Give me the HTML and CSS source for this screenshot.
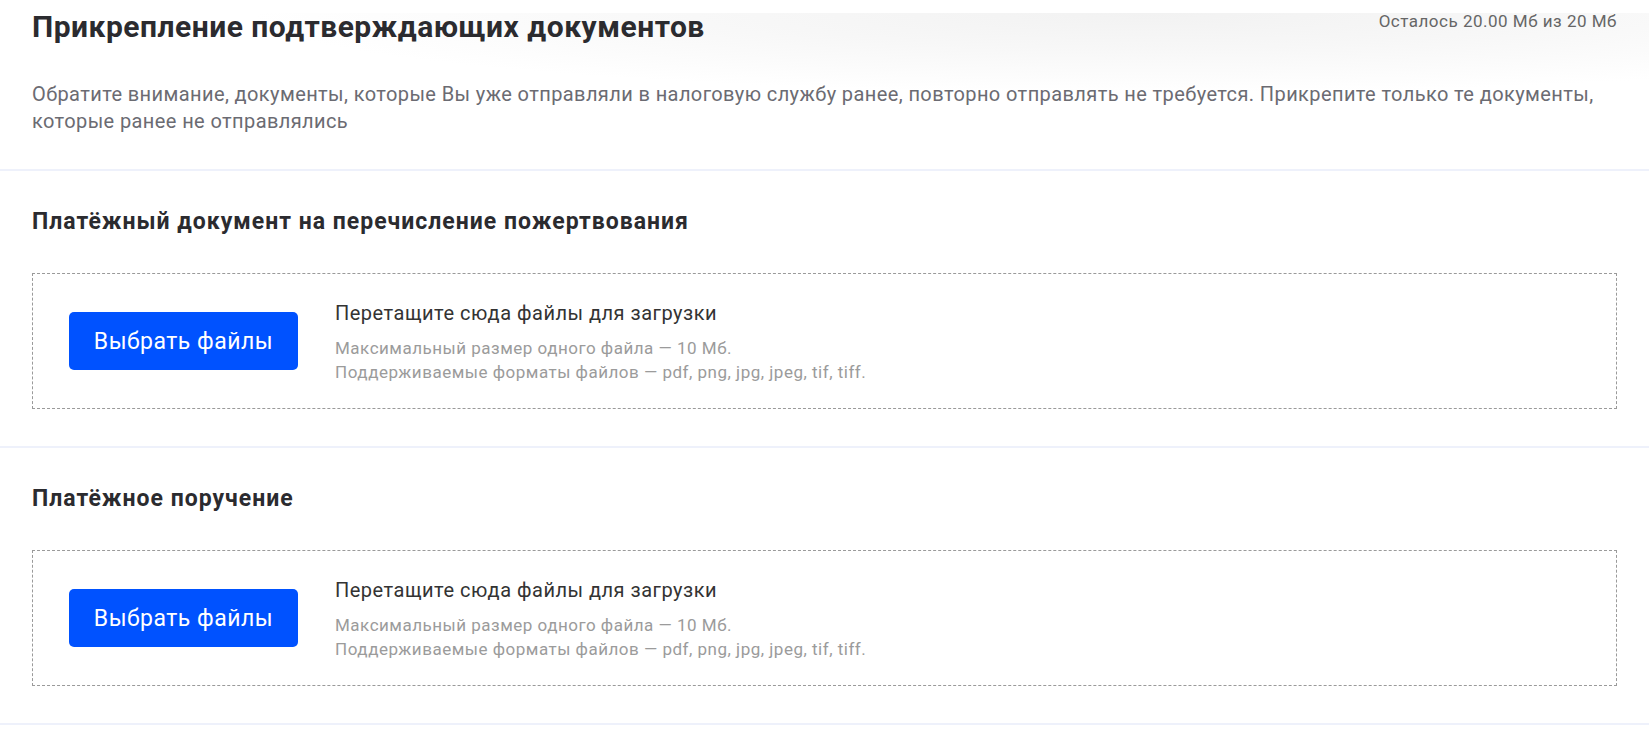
FILE: index.html
```html
<!DOCTYPE html>
<html lang="ru">
<head>
<meta charset="utf-8">
<title>Прикрепление подтверждающих документов</title>
<link rel="stylesheet" href="styles.css">
</head>
<body>
<div class="page">
  <header class="header">
    <div class="header-row">
      <h1 class="title">Прикрепление подтверждающих документов</h1>
      <div class="quota">Осталось 20.00 Мб из 20 Мб</div>
    </div>
    <p class="note">Обратите внимание, документы, которые Вы уже отправляли в налоговую службу ранее, повторно отправлять не требуется. Прикрепите только те документы, которые ранее не отправлялись</p>
  </header>

  <section class="section">
    <h2 class="section-title">Платёжный документ на перечисление пожертвования</h2>
    <div class="dropzone">
      <button class="btn" type="button">Выбрать файлы</button>
      <div class="drop-text">
        <div class="drop-title">Перетащите сюда файлы для загрузки</div>
        <div class="drop-hint">Максимальный размер одного файла — 10 Мб.</div>
        <div class="drop-hint">Поддерживаемые форматы файлов — pdf, png, jpg, jpeg, tif, tiff.</div>
      </div>
    </div>
  </section>

  <section class="section">
    <h2 class="section-title">Платёжное поручение</h2>
    <div class="dropzone">
      <button class="btn" type="button">Выбрать файлы</button>
      <div class="drop-text">
        <div class="drop-title">Перетащите сюда файлы для загрузки</div>
        <div class="drop-hint">Максимальный размер одного файла — 10 Мб.</div>
        <div class="drop-hint">Поддерживаемые форматы файлов — pdf, png, jpg, jpeg, tif, tiff.</div>
      </div>
    </div>
  </section>
</div>
</body>
</html>
```

FILE: styles.css
```css
* { box-sizing: border-box; }

html, body {
  margin: 0;
  padding: 0;
  background: #ffffff;
}

body {
  font-family: Roboto, "Noto Sans", "Liberation Sans", sans-serif;
  color: #333333;
  letter-spacing: 0.5px;
}

.page {
  width: 100%;
}

.header {
  padding: 10px 32px 34px;
  border-bottom: 2px solid #eef1fb;
  background:
    linear-gradient(to bottom, #ffffff 0, #ffffff 13px, rgba(255,255,255,0) 13px),
    radial-gradient(ellipse 900px 80px at 1150px 13px, #f2f2f2 0%, rgba(242,242,242,0.6) 45%, rgba(255,255,255,0) 100%);
}

.header-row {
  display: flex;
  justify-content: space-between;
  align-items: flex-start;
}

.title {
  margin: 0;
  font-size: 30px;
  line-height: 34px;
  font-weight: 700;
  color: #2b2b2f;
}

.quota {
  margin-top: 1px;
  font-size: 17px;
  line-height: 20px;
  color: #666666;
}

.note {
  margin: 37px 0 0;
  font-size: 20px;
  line-height: 27px;
  letter-spacing: 0.4px;
  color: #6b6b72;
}

.section {
  padding: 37px 32px 37px;
  border-bottom: 2px solid #eef1fb;
}

.section-title {
  margin: 0 0 37px;
  font-size: 23px;
  line-height: 28px;
  font-weight: 700;
  letter-spacing: 1px;
  color: #2b2b2f;
}

.dropzone {
  display: flex;
  align-items: flex-start;
  gap: 37px;
  height: 136px;
  padding: 28px 36px;
  border: 1px dashed #9a9a9a;
}

.btn {
  margin-top: 10px;
  width: 229px;
  height: 58px;
  flex: none;
  border: none;
  border-radius: 5px;
  background: #0052ff;
  color: #ffffff;
  font-family: Roboto, "Noto Sans", "Liberation Sans", sans-serif;
  font-size: 23px;
  font-weight: 400;
  letter-spacing: 0.5px;
  cursor: pointer;
}

.drop-title {
  font-size: 20px;
  line-height: 22px;
  color: #333333;
  margin-bottom: 12px;
}

.drop-hint {
  font-size: 17px;
  line-height: 24px;
  color: #9b9b9b;
}
```
